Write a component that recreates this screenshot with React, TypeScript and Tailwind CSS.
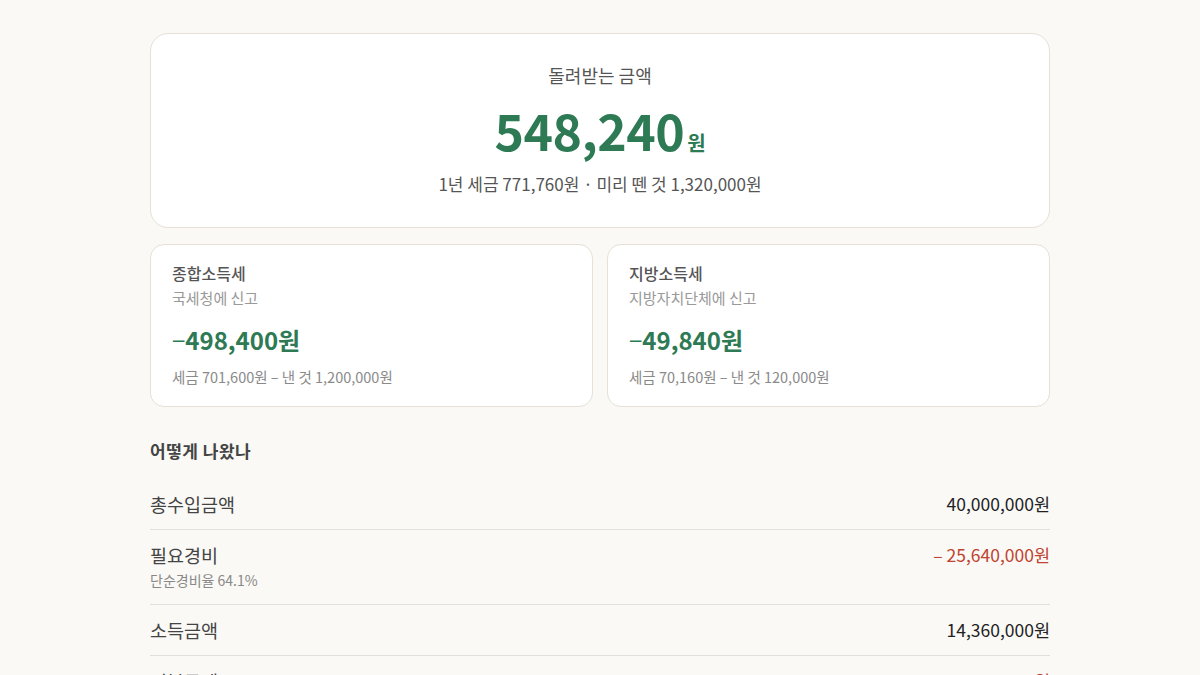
import React from "react";

const font = { fontFamily: '"Noto Sans CJK KR", "Noto Sans", sans-serif' };

interface TaxCard {
  title: string;
  office: string;
  refund: string;
  detail: string;
}

interface Row {
  label: string;
  sub?: string;
  value: string;
  minus?: boolean;
}

const cards: TaxCard[] = [
  { title: "종합소득세", office: "국세청에 신고", refund: "498,400원", detail: "세금 701,600원 – 낸 것 1,200,000원" },
  { title: "지방소득세", office: "지방자치단체에 신고", refund: "49,840원", detail: "세금 70,160원 – 낸 것 120,000원" },
];

const rows: Row[] = [
  { label: "총수입금액", value: "40,000,000원" },
  { label: "필요경비", sub: "단순경비율 64.1%", value: "25,640,000원", minus: true },
  { label: "소득금액", value: "14,360,000원" },
  { label: "기본공제", value: "1,500,000원", minus: true },
];

export default function App() {
  return (
    <div className="min-h-screen bg-[#faf9f6] text-[#333]" style={font}>
      <div className="mx-auto w-[900px] pt-[33px]">
        {/* Refund summary */}
        <div className="flex flex-col items-center rounded-[18px] border border-[#e6e0d6] bg-white pt-[28px] pb-[31px]">
          <p className="text-[18px] leading-[26px] text-[#555]">돌려받는 금액</p>
          <div className="mt-[11px] flex items-baseline text-[#2d7a55]">
            <span className="text-[50px] font-bold leading-[60px] tracking-[-0.5px]">548,240</span>
            <span className="ml-[3px] text-[20px] font-bold">원</span>
          </div>
          <p className="mt-[13px] text-[17px] leading-[24px] text-[#555]">
            1년 세금 771,760원 · 미리 뗀 것 1,320,000원
          </p>
        </div>

        {/* Split cards */}
        <div className="mt-[16px] grid grid-cols-2 gap-[14px]">
          {cards.map((c) => (
            <div key={c.title} className="rounded-[14px] border border-[#e6e0d6] bg-white px-[21px] pt-[16px] pb-[18px]">
              <p className="text-[16px] font-medium leading-[24px] text-[#555]">{c.title}</p>
              <p className="mt-[2px] text-[15px] leading-[22px] text-[#999]">{c.office}</p>
              <p className="mt-[15px] text-[24px] font-bold leading-[32px] text-[#2d7a55]">
                <span className="font-normal">−</span>
                {c.refund}
              </p>
              <p className="mt-[10px] text-[14.5px] leading-[22px] text-[#8a8a8a]">{c.detail}</p>
            </div>
          ))}
        </div>

        {/* Breakdown */}
        <h2 className="mt-[32px] text-[17px] font-bold leading-[24px] tracking-[0.5px] text-[#444]">어떻게 나왔나</h2>
        <div className="mt-[16px]">
          {rows.map((r) => (
            <div key={r.label} className="flex items-start justify-between border-b border-[#e2e0dc] py-[12px]">
              <div>
                <p className="text-[18.5px] leading-[26px] text-[#444]">{r.label}</p>
                {r.sub && <p className="mt-[1px] mb-[1px] text-[14px] leading-[22px] text-[#888]">{r.sub}</p>}
              </div>
              <p className={`text-[17.5px] leading-[26px] ${r.minus ? "text-[#c0432f]" : "text-[#222]"}`}>
                {r.minus ? "– " : ""}
                {r.value}
              </p>
            </div>
          ))}
        </div>
      </div>
    </div>
  );
}
